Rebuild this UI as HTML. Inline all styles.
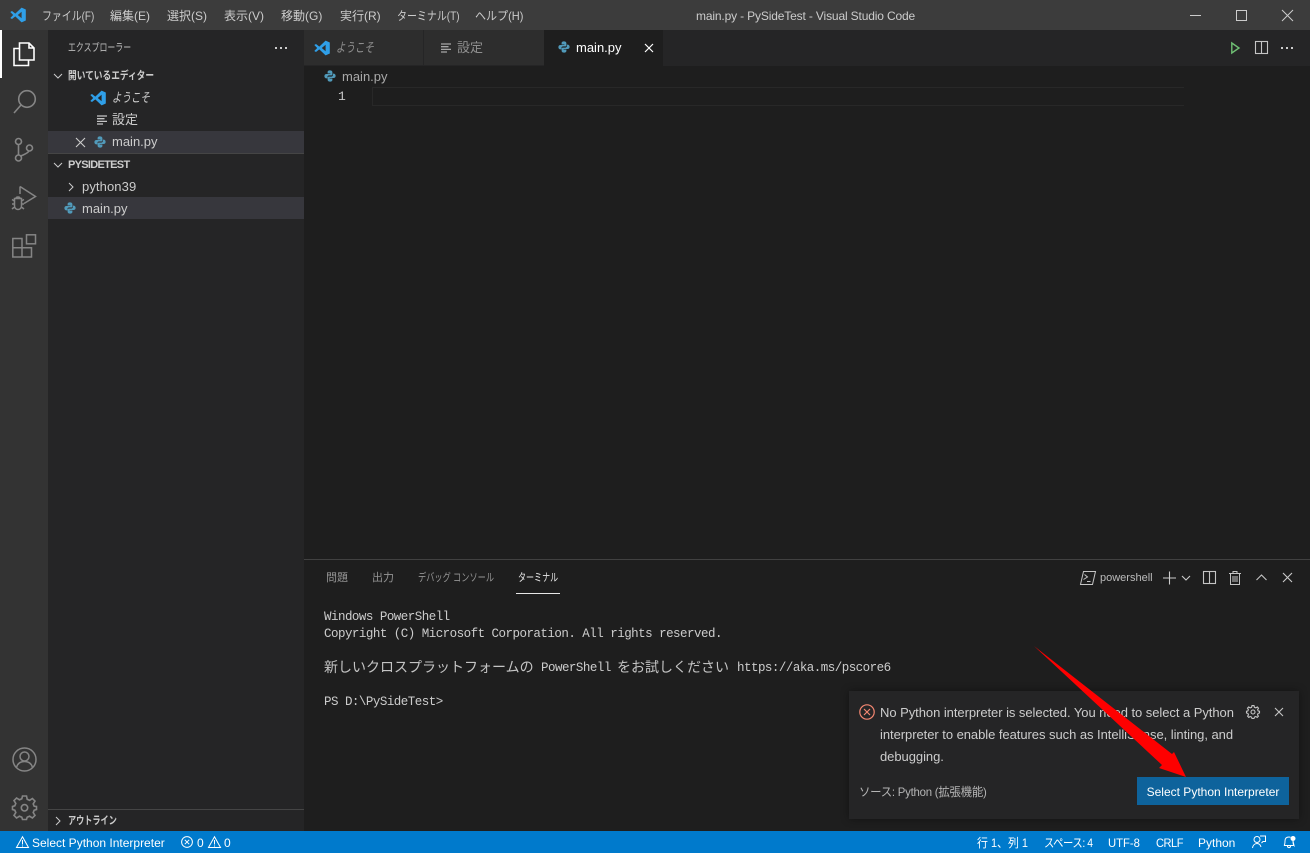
<!DOCTYPE html>
<html lang="ja"><head><meta charset="utf-8"><title>main.py - PySideTest - Visual Studio Code</title>
<style>
html,body{margin:0;padding:0;background:#1e1e1e;width:1310px;height:853px;overflow:hidden}
body{position:relative;font-family:"Liberation Sans","Noto Sans CJK JP",sans-serif;font-size:13px;color:#ccc}
.a{position:absolute;white-space:nowrap;transform-origin:0 0}
.b{position:absolute}
svg{position:absolute;overflow:visible}
.m{top:8px;font-size:12px;line-height:16px;color:#ccc}
.mono{font-family:"Liberation Mono",monospace;font-size:12.5px;letter-spacing:-.52px;line-height:17px;color:#ccc}
.cj{font-family:"Noto Sans CJK JP",sans-serif;font-size:14px;line-height:17px;color:#c4c4c4}
</style></head><body>
<svg width="0" height="0" style="position:absolute"><defs>
<symbol id="vs" viewBox="0 0 16 16"><path d="M11.600 .6L15.800 2.500V13.500L11.600 15.400L5.300 9.400L2 12L.3 11L3.200 8L.3 5L2 4L5.300 6.600ZM11.600 4.800L7.800 8L11.600 11.200Z" fill="#2f9fe8" fill-rule="evenodd"/></symbol>
<symbol id="py" viewBox="0 0 16 16"><path d="M8 .5C5.500 .5 4.800 1.600 4.800 3V4.600H8.500V5.300H3.300C1.800 5.300 .5 6.300 .5 8.200S1.800 11.200 3.200 11.200H4.600V9.300C4.600 8 5.600 7.200 6.800 7.200H9.600C10.600 7.200 11.200 6.500 11.200 5.600V3C11.200 1.600 10 .5 8 .5Z" fill="#519aba"/><path d="M8 15.500C10.500 15.500 11.200 14.400 11.200 13V11.400H7.500V10.700H12.700C14.200 10.700 15.500 9.700 15.500 7.800S14.200 4.800 12.800 4.800H11.900V6.700C11.900 8 10.900 8.800 9.700 8.800H6.400C5.400 8.800 4.800 9.500 4.800 10.400V13C4.800 14.400 6 15.500 8 15.500Z" fill="#519aba"/></symbol>
<symbol id="lines" viewBox="0 0 10 10"><path d="M0 1H10M0 3.700H7.500M0 6.400H10M0 9H6" stroke="#c5c5c5" stroke-width="1.300" fill="none"/></symbol>
</defs></svg>

<!-- title bar -->
<div class="b" style="left:0;top:0;width:1310px;height:30px;background:#3c3c3c"></div>
<svg style="left:10px;top:7px" width="16" height="16"><use href="#vs" width="16" height="16"/></svg>
<div class="a m" style="left:42px;transform:scaleX(.825)">ファイル(F)</div>
<div class="a m" style="left:110px">編集(E)</div>
<div class="a m" style="left:167px">選択(S)</div>
<div class="a m" style="left:224px">表示(V)</div>
<div class="a m" style="left:281px">移動(G)</div>
<div class="a m" style="left:340px">実行(R)</div>
<div class="a m" style="left:397px;transform:scaleX(.83)">ターミナル(T)</div>
<div class="a m" style="left:475px;transform:scaleX(.92)">ヘルプ(H)</div>
<div class="a m" style="left:696px;color:#ccc;letter-spacing:-.15px">main.py - PySideTest - Visual Studio Code</div>
<svg style="left:1190px;top:10px" width="110" height="12" fill="none" stroke="#ccc" stroke-width="1"><path d="M0 5.500H11"/><rect x="46.500" y=".5" width="10" height="10"/><path d="M92 0L103 11M103 0L92 11"/></svg>

<!-- activity bar -->
<div class="b" style="left:0;top:30px;width:48px;height:801px;background:#333"></div>
<div class="b" style="left:0;top:30px;width:2px;height:48px;background:#fff"></div>
<svg style="left:13px;top:42px" width="24" height="24" fill="none" stroke="#fff" stroke-width="1.600"><path d="M6.500 1H16L21 6V18H6.500ZM16 1V6H21"/><path d="M6.500 6.500H1V23.500H15.500V18"/></svg>
<svg style="left:13px;top:90px" width="24" height="24" fill="none" stroke="#858585" stroke-width="1.600"><circle cx="14" cy="9" r="8.300"/><path d="M8 15L1 23"/></svg>
<svg style="left:14px;top:137px" width="22" height="26" fill="none" stroke="#858585" stroke-width="1.600"><circle cx="4.500" cy="4.500" r="3"/><circle cx="4.500" cy="21" r="3"/><circle cx="15.500" cy="11" r="3"/><path d="M4.500 7.500V18M6.800 19C10 17.500 13.500 16.500 15 14"/></svg>
<svg style="left:11px;top:185px" width="26" height="26" fill="none" stroke="#858585" stroke-width="1.500"><path d="M9 1.500L24.500 11.500L13 18.500M9 1.500V9"/><path d="M3.500 13.500H10.500V21C10.500 23 9 24.500 7 24.500S3.500 23 3.500 21ZM5 13.500C5 11.500 9 11.500 9 13.500M1 14.500L3.500 16M13 14.500L10.500 16M1 19H3.500M13 19H10.500M1 24L3.500 22M13 24L10.500 22"/></svg>
<svg style="left:12px;top:234px" width="25" height="25" fill="none" stroke="#858585" stroke-width="1.500"><path d="M.8 4.500H10V23H.8ZM.8 13.800H19.500V23H10"/><rect x="14.500" y=".8" width="9" height="9"/></svg>
<svg style="left:12px;top:747px" width="25" height="25" fill="none" stroke="#858585" stroke-width="1.500"><circle cx="12.500" cy="12.500" r="11.500"/><circle cx="12.500" cy="9.500" r="4.500"/><path d="M4.500 20.500C5.500 16.500 8.500 14.500 12.500 14.500S19.500 16.500 20.500 20.500"/></svg>
<svg style="left:12px;top:795px" width="25" height="25" fill="none" stroke="#858585" stroke-width="1.600"><path d="M10.500 1H14.500L15.200 4.300L17.600 5.300L20.400 3.500L23 6.100L21.200 8.900L22.200 11.300L24.500 11.500V14.500L22.200 15.200L21.200 17.600L23 20.400L20.400 23L17.600 21.200L15.200 22.200L14.500 24.500H10.500L9.800 22.200L7.400 21.200L4.600 23L2 20.400L3.800 17.600L2.800 15.200L.5 14.500V11.500L2.800 10.800L3.800 8.400L2 5.600L4.600 3L7.400 4.800L9.800 3.800Z"/><circle cx="12.500" cy="12.800" r="3.200"/></svg>

<!-- sidebar -->
<div class="b" style="left:48px;top:30px;width:256px;height:801px;background:#252526"></div>
<div class="a" style="left:68px;top:41px;font-size:11px;line-height:14px;color:#bbb;transform:scaleX(.72)">エクスプローラー</div>
<svg style="left:275px;top:47px" width="14" height="2" fill="#ccc"><rect width="2" height="2"/><rect x="5" width="2" height="2"/><rect x="10" width="2" height="2"/></svg>
<svg style="left:53px;top:73px" width="10" height="7" fill="none" stroke="#ccc"><path d="M1 1L5 5L9 1"/></svg>
<div class="a" style="left:68px;top:69px;font-size:11px;line-height:14px;font-weight:bold;color:#ccc;transform:scaleX(.79)">開いているエディター</div>
<svg style="left:90px;top:90px" width="16" height="16"><use href="#vs" width="16" height="16"/></svg>
<div class="a" style="left:112px;top:90px;font-size:13px;line-height:16px;font-style:italic;color:#ccc;transform:scaleX(.73)">ようこそ</div>
<svg style="left:97px;top:115px" width="10" height="10"><use href="#lines" width="10" height="10"/></svg>
<div class="a" style="left:112px;top:112px;font-size:13px;line-height:16px;color:#ccc">設定</div>
<div class="b" style="left:48px;top:131px;width:256px;height:22px;background:#37373d"></div>
<svg style="left:75px;top:137px" width="10" height="10" fill="none" stroke="#ccc" stroke-width="1.100"><path d="M1 1L10 10M10 1L1 10"/></svg>
<svg style="left:94px;top:136px" width="12" height="12"><use href="#py" width="12" height="12"/></svg>
<div class="a" style="left:112px;top:134px;font-size:13px;line-height:16px;color:#ccc">main.py</div>
<div class="b" style="left:48px;top:153px;width:256px;height:1px;background:#454545"></div>
<svg style="left:53px;top:162px" width="10" height="7" fill="none" stroke="#ccc"><path d="M1 1L5 5L9 1"/></svg>
<div class="a" style="left:68px;top:158px;font-size:11px;line-height:14px;font-weight:bold;color:#ccc;letter-spacing:-.7px">PYSIDETEST</div>
<svg style="left:68px;top:182px" width="7" height="10" fill="none" stroke="#ccc"><path d="M1 1L5 5L1 9"/></svg>
<div class="a" style="left:82px;top:179px;font-size:13px;line-height:16px;color:#ccc;letter-spacing:.1px">python39</div>
<div class="b" style="left:48px;top:197px;width:256px;height:22px;background:#37373d"></div>
<svg style="left:64px;top:202px" width="12" height="12"><use href="#py" width="12" height="12"/></svg>
<div class="a" style="left:82px;top:201px;font-size:13px;line-height:16px;color:#ccc">main.py</div>
<div class="b" style="left:48px;top:809px;width:256px;height:1px;background:#454545"></div>
<svg style="left:55px;top:816px" width="7" height="10" fill="none" stroke="#ccc"><path d="M1 1L5 5L1 9"/></svg>
<div class="a" style="left:68px;top:814px;font-size:11px;line-height:14px;font-weight:bold;color:#ccc;transform:scaleX(.74)">アウトライン</div>

<!-- tabs -->
<div class="b" style="left:304px;top:30px;width:1006px;height:36px;background:#252526"></div>
<div class="b" style="left:304px;top:30px;width:119px;height:35px;background:#2d2d2d"></div>
<div class="b" style="left:424px;top:30px;width:120px;height:35px;background:#2d2d2d"></div>
<div class="b" style="left:544px;top:30px;width:119px;height:36px;background:#1e1e1e"></div>
<svg style="left:314px;top:40px" width="16" height="16"><use href="#vs" width="16" height="16"/></svg>
<div class="a" style="left:336px;top:40px;font-size:13px;line-height:16px;font-style:italic;color:#8f8f8f;transform:scaleX(.73)">ようこそ</div>
<svg style="left:441px;top:43px" width="10" height="10" opacity=".8"><use href="#lines" width="10" height="10"/></svg>
<div class="a" style="left:457px;top:40px;font-size:13px;line-height:16px;color:#8f8f8f">設定</div>
<svg style="left:558px;top:41px" width="12" height="12"><use href="#py" width="12" height="12"/></svg>
<div class="a" style="left:576px;top:40px;font-size:13px;line-height:16px;color:#fff">main.py</div>
<svg style="left:644px;top:43px" width="10" height="10" fill="none" stroke="#fff" stroke-width="1.200"><path d="M1 1L9 9M9 1L1 9"/></svg>
<svg style="left:1231px;top:42px" width="9" height="12" fill="none" stroke="#6fbf73" stroke-width="1.400"><path d="M.8 1L8 6L.8 11Z"/></svg>
<svg style="left:1255px;top:41px" width="13" height="13" fill="none" stroke="#c5c5c5" stroke-width="1.100"><rect x=".5" y=".5" width="12" height="12"/><path d="M6.500 .5V12.500"/></svg>
<svg style="left:1281px;top:47px" width="14" height="2" fill="#ccc"><rect width="2" height="2"/><rect x="5" width="2" height="2"/><rect x="10" width="2" height="2"/></svg>

<!-- editor -->
<svg style="left:324px;top:70px" width="12" height="12"><use href="#py" width="12" height="12"/></svg>
<div class="a" style="left:342px;top:69px;font-size:13px;line-height:16px;color:#a9a9a9">main.py</div>
<div class="a" style="left:338px;top:88px;font-family:'Liberation Mono',monospace;font-size:13px;line-height:17px;color:#c6c6c6">1</div>
<div class="b" style="left:372px;top:87px;width:811px;height:17px;border:1px solid #282828;border-right:none;box-sizing:content-box"></div>

<!-- panel -->
<div class="b" style="left:304px;top:559px;width:1006px;height:1px;background:#414141"></div>
<div class="a" style="left:326px;top:571px;font-size:11px;line-height:14px;color:#959595">問題</div>
<div class="a" style="left:372px;top:571px;font-size:11px;line-height:14px;color:#959595">出力</div>
<div class="a" style="left:418px;top:571px;font-size:11px;line-height:14px;color:#959595;transform:scaleX(.745)">デバッグ コンソール</div>
<div class="a" style="left:518px;top:571px;font-size:11px;line-height:14px;color:#e7e7e7;transform:scaleX(.73)">ターミナル</div>
<div class="b" style="left:516px;top:593px;width:44px;height:1px;background:#e7e7e7"></div>
<svg style="left:1080px;top:571px" width="16" height="14" fill="none" stroke="#c5c5c5"><path d="M3.500 .5H15.500L12.500 13.500H.5Z"/><path d="M4.500 3.500L7.500 6L3.500 8.500M7 10.500H10.500"/></svg>
<div class="a" style="left:1100px;top:571px;font-size:11px;line-height:14px;color:#bbb">powershell</div>
<svg style="left:1163px;top:571px" width="28" height="14" fill="none" stroke="#ccc" stroke-width="1.100"><path d="M6.500 .5V13.500M0 7H13"/><path d="M19 5L23 9L27 5"/></svg>
<svg style="left:1203px;top:571px" width="13" height="13" fill="none" stroke="#c5c5c5" stroke-width="1.100"><rect x=".5" y=".5" width="12" height="12"/><path d="M6.500 .5V12.500"/></svg>
<svg style="left:1229px;top:571px" width="12" height="14" fill="none" stroke="#c5c5c5"><path d="M0 2.500H12M4 2.500V.5H8V2.500M1.500 2.500V13.500H10.500V2.500M4 5V11M6 5V11M8 5V11"/></svg>
<svg style="left:1256px;top:574px" width="11" height="7" fill="none" stroke="#c5c5c5" stroke-width="1.100"><path d="M.5 6L5.500 1L10.500 6"/></svg>
<svg style="left:1283px;top:573px" width="9" height="9" fill="none" stroke="#ccc" stroke-width="1.100"><path d="M0 0L9 9M9 0L0 9"/></svg>

<div class="a mono" style="left:324px;top:609px">Windows PowerShell</div>
<div class="a mono" style="left:324px;top:626px">Copyright (C) Microsoft Corporation. All rights reserved.</div>
<div class="a cj" style="left:324px;top:659px">新しいクロスプラットフォームの</div>
<div class="a mono" style="left:541px;top:660px">PowerShell</div>
<div class="a cj" style="left:617px;top:659px">をお試しください</div>
<div class="a mono" style="left:737px;top:660px">https://aka.ms/pscore6</div>
<div class="a mono" style="left:324px;top:694px">PS D:\PySideTest&gt;</div>

<!-- notification -->
<div class="b" style="left:849px;top:691px;width:450px;height:128px;background:#252526;box-shadow:0 0 8px rgba(0,0,0,.4)"></div>
<svg style="left:859px;top:704px" width="16" height="16" fill="none" stroke="#f48771" stroke-width="1.200"><circle cx="8" cy="8" r="7.200"/><path d="M5 5L11 11M11 5L5 11"/></svg>
<div class="a" style="left:880px;top:702px;font-size:13px;letter-spacing:-.05px;line-height:22px;color:#ccc">No Python interpreter is selected. You need to select a Python<br>interpreter to enable features such as IntelliSense, linting, and<br>debugging.</div>
<svg style="left:1246px;top:705px" width="14" height="14" fill="none" stroke="#c5c5c5" stroke-width="1.100"><path d="M6 .6H8L8.400 2.300L9.800 2.900L11.300 2L12.500 3.200L11.600 4.700L12.200 6L13.500 6.200V8L12.100 8.400L11.500 9.800L12.400 11.200L11.200 12.400L9.800 11.500L8.400 12.100L8 13.500H6L5.600 12.100L4.200 11.500L2.800 12.400L1.600 11.200L2.500 9.800L1.900 8.400L.5 8V6.200L1.800 6L2.400 4.700L1.500 3.200L2.700 2L4.200 2.900L5.600 2.300Z"/><circle cx="7" cy="7" r="2"/></svg>
<svg style="left:1274px;top:707px" width="10" height="10" fill="none" stroke="#c5c5c5" stroke-width="1.100"><path d="M1 1L9 9M9 1L1 9"/></svg>
<div class="a" style="left:859px;top:784px;font-size:12px;line-height:16px;color:#b5b5b5;letter-spacing:-.25px;transform:scaleX(.95)">ソース: Python (拡張機能)</div>
<div class="a" style="left:1137px;top:777px;width:152px;height:28px;background:#0e639c;color:#fff;font-size:12px;line-height:30px;text-align:center">Select Python Interpreter</div>

<!-- red arrow -->
<svg style="left:0;top:0" width="1310" height="853"><path d="M1034 646L1172 754L1174 752L1186 777L1159 768L1162 765Z" fill="#fe0000"/></svg>

<!-- status bar -->
<div class="b" style="left:0;top:831px;width:1310px;height:22px;background:#007acc"></div>
<svg style="left:16px;top:836px" width="13" height="12" fill="none" stroke="#fff"><path d="M6.500 .8L12.500 11.500H.5Z"/><path d="M6.500 4V8.500M6.500 9.500V10.500"/></svg>
<div class="a" style="left:32px;top:835px;font-size:12px;line-height:16px;color:#fff">Select Python Interpreter</div>
<svg style="left:181px;top:836px" width="12" height="12" fill="none" stroke="#fff"><circle cx="6" cy="6" r="5.400"/><path d="M3.800 3.800L8.200 8.200M8.200 3.800L3.800 8.200"/></svg>
<div class="a" style="left:197px;top:835px;font-size:12px;line-height:16px;color:#fff">0</div>
<svg style="left:208px;top:836px" width="13" height="12" fill="none" stroke="#fff"><path d="M6.500 .8L12.500 11.500H.5Z"/><path d="M6.500 4V8.500M6.500 9.500V10.500"/></svg>
<div class="a" style="left:224px;top:835px;font-size:12px;line-height:16px;color:#fff">0</div>
<div class="a" style="left:977px;top:835px;font-size:12px;line-height:16px;color:#fff;transform:scaleX(.91)">行 1、列 1</div>
<div class="a" style="left:1044px;top:835px;font-size:12px;line-height:16px;color:#fff;letter-spacing:-.5px;transform:scaleX(.86)">スペース: 4</div>
<div class="a" style="left:1108px;top:835px;font-size:12px;line-height:16px;color:#fff;transform:scaleX(.94)">UTF-8</div>
<div class="a" style="left:1156px;top:835px;font-size:12px;line-height:16px;color:#fff;letter-spacing:-.5px;transform:scaleX(.92)">CRLF</div>
<div class="a" style="left:1198px;top:835px;font-size:12px;line-height:16px;color:#fff">Python</div>
<svg style="left:1252px;top:835px" width="14" height="14" fill="none" stroke="#fff"><circle cx="5" cy="4.500" r="3"/><path d="M.5 13C1 10 3 8.500 5 8.500S8.500 10 9 12M8 1H13.500V6.500H11L9.500 8"/></svg>
<svg style="left:1282px;top:835px" width="14" height="14" fill="none" stroke="#fff"><path d="M2 10.500C3 9.500 3 8 3 6C3 3.500 4.500 2 7 2C7.500 2 8 2.100 8.500 2.300M11 6C11 8 11 9.500 12 10.500ZM2 10.500H12M5.500 11C5.500 13.200 8.500 13.200 8.500 11"/><circle cx="11" cy="3.500" r="2.500" fill="#fff" stroke="none"/></svg>
</body></html>
